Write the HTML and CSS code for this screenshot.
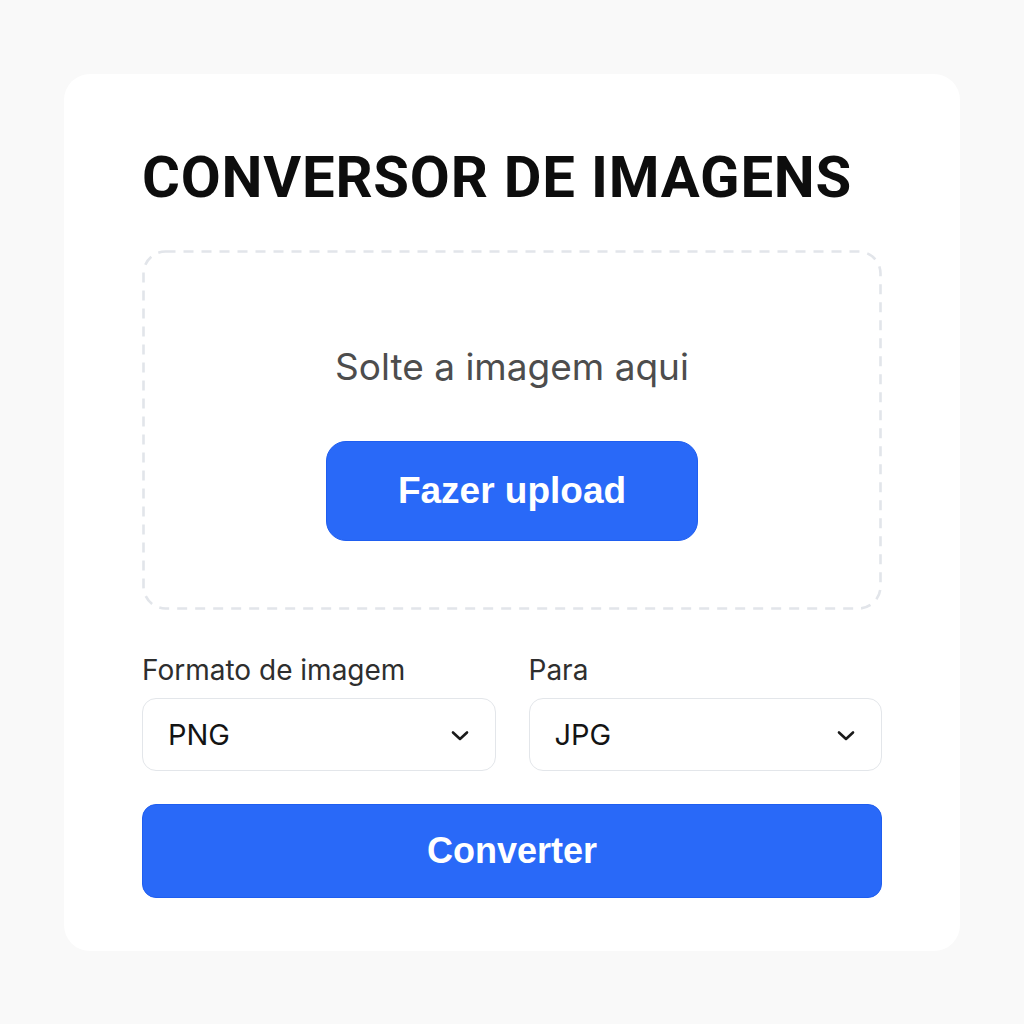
FILE: index.html
```html
<!DOCTYPE html>
<html lang="pt">
<head>
<meta charset="utf-8">
<title>Conversor de imagens</title>
<link rel="stylesheet" href="styles.css">
</head>
<body>
<main class="card">
  <h1 class="title">CONVERSOR DE IMAGENS</h1>
  <section class="dropzone">
    <p class="drop-text">Solte a imagem aqui</p>
    <button class="btn upload">Fazer upload</button>
  </section>
  <div class="fields">
    <div class="field">
      <label class="label">Formato de imagem</label>
      <div class="select"><span>PNG</span>
        <svg class="chev" width="18" height="12" viewBox="0 0 18 12"><path d="M2 2.5 L9 9 L16 2.5" fill="none" stroke="#1a1a1a" stroke-width="2.6" stroke-linecap="round" stroke-linejoin="round"/></svg>
      </div>
    </div>
    <div class="field">
      <label class="label">Para</label>
      <div class="select"><span>JPG</span>
        <svg class="chev" width="18" height="12" viewBox="0 0 18 12"><path d="M2 2.5 L9 9 L16 2.5" fill="none" stroke="#1a1a1a" stroke-width="2.6" stroke-linecap="round" stroke-linejoin="round"/></svg>
      </div>
    </div>
  </div>
  <button class="btn convert">Converter</button>
</main>
</body>
</html>
```
FILE: styles.css
```css
* { box-sizing: border-box; }
html, body { margin: 0; padding: 0; }
body {
  background: #f9f9f9;
  width: 1024px;
  height: 1024px;
  padding: 74px 64px 73px 64px;
  font-family: Inter, "Noto Sans", sans-serif;
}
.card {
  background: #ffffff;
  border-radius: 26px;
  height: 877px;
  padding: 70px 78px 0 78px;
  display: flex;
  flex-direction: column;
}
.title {
  margin: 0;
  font-family: Roboto, "Liberation Sans", Arial, sans-serif;
  font-weight: 700;
  font-size: 58px;
  letter-spacing: 0.8px;
  line-height: 66px;
  color: #0d0d0d;
}
.dropzone {
  margin-top: 40px;
  height: 360px;
  background-image: url("data:image/svg+xml,%3Csvg xmlns='http://www.w3.org/2000/svg' width='740' height='360'%3E%3Crect x='1.5' y='1.5' width='737' height='357' rx='22' ry='22' fill='none' stroke='%23e2e5ea' stroke-width='2.6' stroke-dasharray='10 8'/%3E%3C/svg%3E");
  background-repeat: no-repeat;
  display: flex;
  flex-direction: column;
  align-items: center;
  padding-top: 95px;
}
.drop-text {
  margin: 0;
  font-size: 37px;
  line-height: 44px;
  color: #4d4d4d;
  font-weight: 400;
}
.btn {
  border: 1px solid #1f5ef0;
  background: #2969f8;
  color: #fff;
  font-family: "Liberation Sans", Arial, sans-serif;
  font-weight: 700;
  cursor: pointer;
}
.upload {
  margin-top: 52px;
  width: 372px;
  height: 100px;
  border-radius: 20px;
  font-size: 37px;
}
.fields {
  margin-top: 42px;
  display: grid;
  grid-template-columns: 1fr 1fr;
  column-gap: 33px;
}
.field { display: flex; flex-direction: column; }
.label {
  font-size: 28px;
  line-height: 36px;
  color: #2e2e2e;
}
.select {
  margin-top: 10px;
  height: 73px;
  border: 1.5px solid #e3e6ea;
  border-radius: 14px;
  display: flex;
  align-items: center;
  justify-content: space-between;
  padding: 0 26px 0 25px;
  font-size: 29px;
  color: #141414;
}
.chev { margin-top: 2px; }
.convert {
  margin-top: 33px;
  height: 94px;
  border-radius: 14px;
  font-size: 36px;
  width: 100%;
}
```
